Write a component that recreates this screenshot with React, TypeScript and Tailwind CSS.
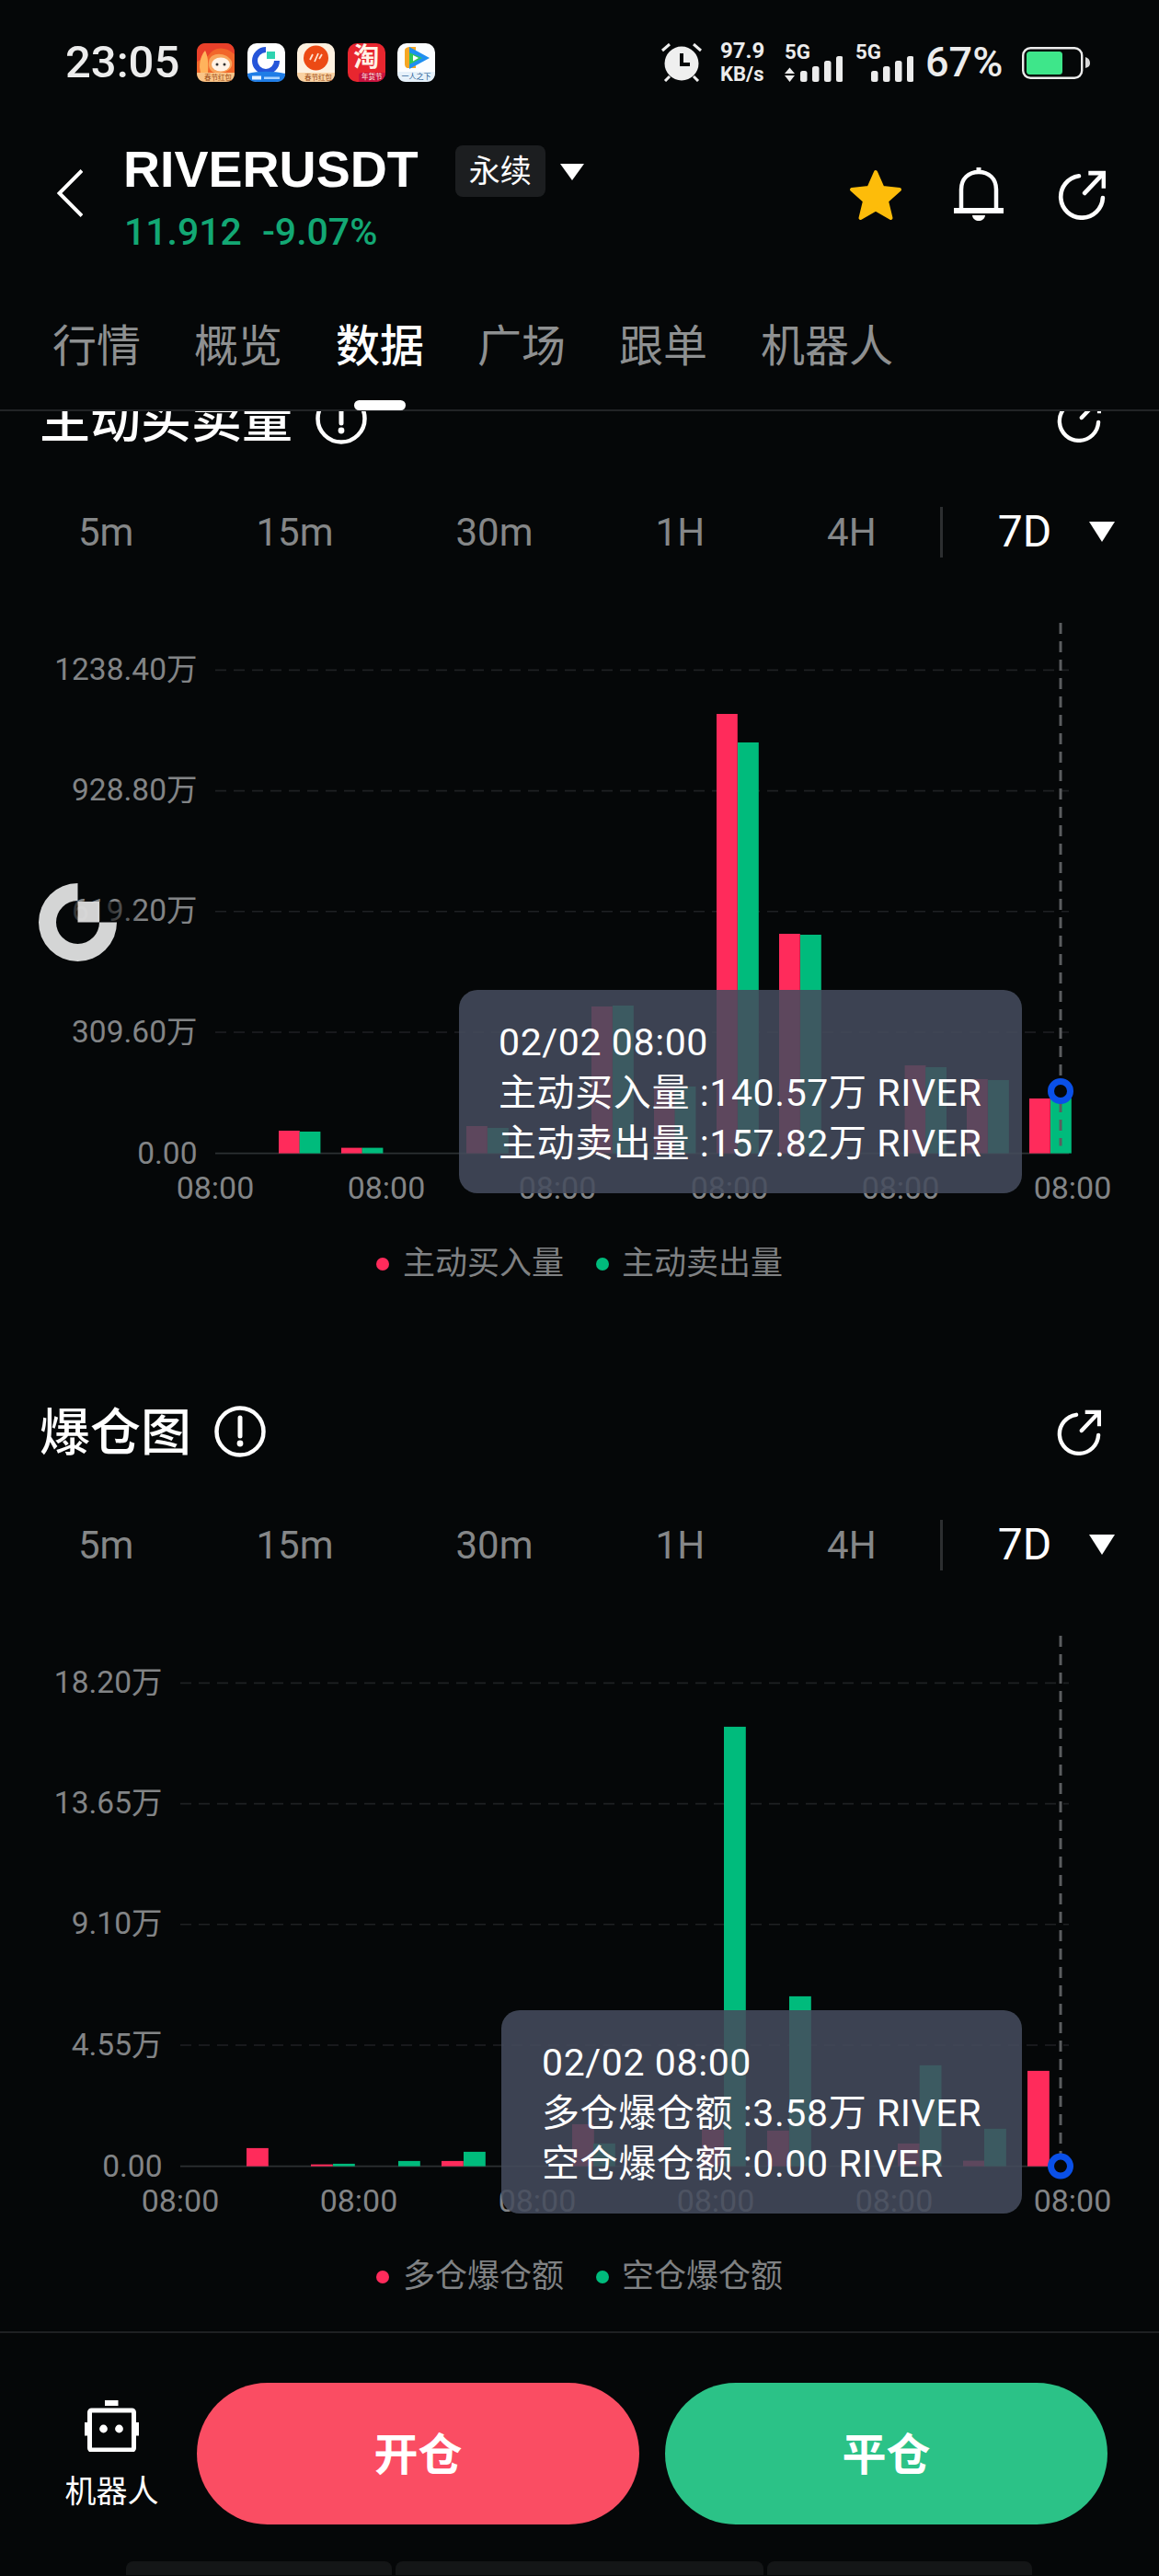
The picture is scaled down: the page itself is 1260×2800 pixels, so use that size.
import React from "react";

const RED = "#ff2b5b";
const GREEN = "#00bb7c";

type Bar = [number, number, string];

const flowBars: Bar[] = [
  [303, 24.6, RED], [325.6, 23.6, GREEN],
  [371, 6, RED], [393.6, 6, GREEN],
  [507, 29.6, RED], [530, 27.6, GREEN],
  [643, 159.6, RED], [666, 160.6, GREEN],
  [711, 72, RED], [733.6, 72.6, GREEN],
  [779, 477.6, RED], [802, 446.6, GREEN],
  [847, 238.6, RED], [870, 237.6, GREEN],
  [983.6, 95.6, RED], [1006.2, 93.6, GREEN],
  [1051, 80.6, RED], [1074, 79.6, GREEN],
  [1119, 59.6, RED], [1142, 59.6, GREEN],
];

const liqBars: Bar[] = [
  [268, 19.7, RED],
  [338, 2, RED], [362, 2.7, GREEN],
  [433, 5.7, GREEN],
  [480, 5.7, RED], [504, 15.7, GREEN],
  [622, 45.7, RED], [645, 24.7, GREEN],
  [763, 39.7, RED], [787, 477.7, GREEN],
  [834, 38.7, RED], [858, 184.7, GREEN],
  [976, 24.7, RED], [999.7, 109.7, GREEN],
  [1047, 6, RED], [1070, 40.7, GREEN],
  [1117, 103.7, RED],
];

function BackIcon() {
  return (
    <svg width="28" height="52" viewBox="0 0 28 52" fill="none" stroke="white" strokeWidth="4">
      <path d="M27 1.5 L2.5 26 L27 50.5" />
    </svg>
  );
}

function StarIcon() {
  return (
    <svg width="58" height="56" viewBox="0 0 58 56">
      <path
        d="M29 3 L36.5 20 L55 22 L41 34.5 L45.5 53 L29 43.5 L12.5 53 L17 34.5 L3 22 L21.5 20 Z"
        fill="#fdbc0a"
        stroke="#fdbc0a"
        strokeWidth="4"
        strokeLinejoin="round"
      />
    </svg>
  );
}

function BellIcon() {
  return (
    <svg width="54" height="60" viewBox="0 0 54 60" fill="none" stroke="white" strokeWidth="4.5">
      <path d="M8 47 V24 C8 12 16 5 27 5 C38 5 46 12 46 24 V47" />
      <path d="M0 47 H54" strokeWidth="6" />
      <path d="M27 0 V5" strokeWidth="5" />
      <path d="M20 52 H34 C33 60 21 60 20 52 Z" fill="white" stroke="none" />
    </svg>
  );
}

function ShareIcon({ size = 54 }: { size?: number }) {
  return (
    <svg width={size} height={size} viewBox="0 0 52 52" fill="none" stroke="white" strokeWidth="4.5" strokeLinecap="round">
      <path d="M24 6 A22 22 0 1 0 49 29" />
      <path d="M30 24 L49 4" />
      <path d="M34 3 H50 V19" strokeLinecap="butt" />
    </svg>
  );
}

function InfoIcon() {
  return (
    <svg width="56" height="56" viewBox="0 0 56 56" fill="none" stroke="white" strokeWidth="4.5">
      <circle cx="28" cy="28" r="25.5" />
      <path d="M28 13 V33" strokeWidth="5" strokeLinecap="round" />
      <circle cx="28" cy="41" r="3.4" fill="white" stroke="none" />
    </svg>
  );
}

function AlarmIcon() {
  return (
    <svg width="44" height="42" viewBox="0 0 44 42">
      <circle cx="22" cy="22" r="18.5" fill="#efefef" />
      <path d="M22 11 V23 H31" fill="none" stroke="#050708" strokeWidth="4" />
      <path d="M1 8 L9 1 M43 8 L35 1 M4 41 L9 36 M40 41 L35 36" stroke="#efefef" strokeWidth="3" />
    </svg>
  );
}

function SimSignal({ arrows }: { arrows?: boolean }) {
  const bars = [
    [17, 12],
    [30, 17],
    [43, 23],
    [56, 28],
  ];
  // taller than the 42px row so the 5G label keeps its ascent inside the box
  return (
    <svg className="mt-[-6px]" width="63" height="48" viewBox="0 -6 63 48">
      <text x="0" y="17" fill="#ececec" fontSize="22" fontWeight="700" fontFamily="Roboto, sans-serif" textLength="28" lengthAdjust="spacingAndGlyphs">
        5G
      </text>
      {arrows && (
        <path d="M5.5 26.5 L11 33 H0 Z M0 35 H11 L5.5 42 Z" fill="#ececec" />
      )}
      {bars.map(([x, h]) => (
        <rect key={x} x={x} y={42 - h} width="7.5" height={h} rx="2.5" fill="#ececec" />
      ))}
    </svg>
  );
}

function Battery() {
  return (
    <svg width="74" height="35" viewBox="0 0 74 35">
      <rect x="1.2" y="1.2" width="64" height="32.6" rx="8" fill="none" stroke="#ececec" strokeWidth="2.4" />
      <rect x="5" y="5" width="39" height="25" rx="3.5" fill="#3ee68a" />
      <path d="M69 11 C72 12 74 14 74 17.5 C74 21 72 22 69 23 Z" fill="#d8d8d8" />
    </svg>
  );
}

// little launcher icons shown beside the clock
function AppIcons() {
  return (
    <div className="flex gap-[13.6px]">
      <svg width="41" height="42" viewBox="0 0 41 42">
        <rect width="41" height="42" rx="10" fill="#f2662a" />
        <path d="M0 10 C0 3 4 0 10 0 H31 C37 0 41 3 41 10 V12 C30 2 18 4 12 14 L0 20 Z" fill="#e9402a" />
        <path d="M3 26 C3 16 7 10 9 8 C11 12 13 18 12 32 H4 Z" fill="#ffb35c" />
        <path d="M13 20 C14 9 33 9 38 20 C40 30 28 33 20 32 C15 31 12 27 13 20 Z" fill="#f8a45a" />
        <ellipse cx="26" cy="23" rx="10" ry="7.5" fill="#fff2e6" />
        <circle cx="22" cy="23" r="1.5" fill="#333" />
        <circle cx="30" cy="23" r="1.5" fill="#333" />
        <path d="M0 32 H41 C41 39 37 42 31 42 H10 C4 42 0 39 0 32 Z" fill="#f9c487" />
        <text x="23" y="39.5" textAnchor="middle" fill="#9c4d17" fontSize="7.5" fontFamily="'Noto Sans CJK SC', sans-serif">
          春节红包
        </text>
      </svg>
      <svg width="41" height="42" viewBox="0 0 41 42">
        <rect width="41" height="42" rx="10" fill="#ffffff" />
        <path d="M20 7 A12 12 0 1 0 32 19" fill="none" stroke="#2555d9" strokeWidth="6" />
        <rect x="21" y="9" width="9" height="8" fill="#2ed3b0" />
        <path d="M0 33 C12 30 28 30 41 33 C41 39 37 42 31 42 H10 C4 42 0 39 0 33 Z" fill="#1f7de6" />
        <rect x="5" y="35.5" width="10" height="4" fill="#e6f2ff" />
        <rect x="18" y="36.5" width="17" height="2.5" fill="#a8d3ff" />
      </svg>
      <svg width="41" height="42" viewBox="0 0 41 42">
        <rect width="41" height="42" rx="10" fill="#fdf1e0" />
        <circle cx="20.5" cy="16" r="13.5" fill="#ec4a14" />
        <path d="M14 18 L17 12 M19 20 L23 11 M24 17 L27 12" stroke="#ffe3cf" strokeWidth="1.8" />
        <path d="M0 32 H41 C41 39 37 42 31 42 H10 C4 42 0 39 0 32 Z" fill="#f9d2a3" />
        <text x="23" y="39.5" textAnchor="middle" fill="#9c4d17" fontSize="7.5" fontFamily="'Noto Sans CJK SC', sans-serif">
          春节红包
        </text>
      </svg>
      <div className="w-[41px] h-[42px] rounded-[10px] overflow-hidden bg-[#e8262f] flex flex-col items-center text-[#fff3e6]">
        <span className="h-[32px] text-[28px] leading-[32px] font-bold">淘</span>
        <span className="self-end w-[29px] h-[10px] rounded-tl-[3px] bg-[#c9133f] text-[7.5px] leading-[10px] text-center whitespace-nowrap">年货节</span>
      </div>
      <svg width="41" height="42" viewBox="0 0 41 42">
        <rect width="41" height="42" rx="10" fill="#fbfdff" />
        <path d="M8 8 C8 5 11 4 14 4 L20 4 V27 L12 27 C9 27 8 25 8 22 Z" fill="#f5a623" />
        <path d="M13 4 L35 16 L13 28 Z" fill="#1f8ff0" />
        <path d="M13 10 L27 16 L13 23 Z" fill="#30c857" />
        <path d="M17 13 L23 16 L17 19.5 Z" fill="#ffffff" />
        <path d="M0 31 H41 C41 39 37 42 31 42 H10 C4 42 0 39 0 31 Z" fill="#e6f1fa" />
        <text x="20.5" y="39" textAnchor="middle" fill="#1e5c94" fontSize="8" fontFamily="'Noto Sans CJK SC', sans-serif">
          一人之下
        </text>
      </svg>
    </div>
  );
}

function RangeRow() {
  return (
    <div className="flex items-center h-[80px] pl-[85px] text-[42px] text-[#858788]">
      <div className="flex items-center gap-[133px]">
        <span>5m</span>
        <span>15m</span>
        <span>30m</span>
        <span>1H</span>
        <span>4H</span>
      </div>
      <div className="ml-[69px] w-[3px] h-[55px] bg-[#2c2e30]" />
      <span className="ml-[60px] text-[48px] text-white">7D</span>
      <svg className="ml-[41px]" width="28" height="22" viewBox="0 0 28 22">
        <path d="M0 0 H28 L14 22 Z" fill="white" />
      </svg>
    </div>
  );
}

type ChartProps = {
  ticks: string[];
  labelXs: number[];
  gridStart: number;
  bars: Bar[];
  barWidth: number;
  dotY: number;
  tooltipClass: string;
  tooltip: string[];
};

function Chart({ ticks, labelXs, gridStart, bars, barWidth, dotY, tooltipClass, tooltip }: ChartProps) {
  const base = 635.6;
  const gridYs = [110.4, 241.6, 372.8, 504];
  return (
    <div className="relative h-[722px]">
      <svg width="1260" height="722" viewBox="0 0 1260 722" className="block">
        {gridYs.map((y) => (
          <line key={y} x1={gridStart} x2="1162" y1={y} y2={y} stroke="#1f2123" strokeWidth="1.6" strokeDasharray="12 8" />
        ))}
        <line x1={gridStart} x2="1162" y1={base} y2={base} stroke="#2c3032" strokeWidth="1.6" />
        {ticks.map((t, i) => (
          <text key={t} x={gridStart - 19.5} y={[121, 252, 383, 515, 647][i]} textAnchor="end" fill="#828486" fontSize="33.5">
            {t}
          </text>
        ))}
        {bars.map(([x, h, c], i) => (
          <rect key={i} x={x} y={base - h} width={barWidth} height={h} fill={c} />
        ))}
        {labelXs.map((x) => (
          <text key={x} x={x} y={685} textAnchor="middle" fill="#828486" fontSize="34">
            08:00
          </text>
        ))}
        <line x1="1153" x2="1153" y1="59" y2={base - 8} stroke="#5b5d5f" strokeWidth="3" strokeDasharray="12 8" />
        <circle cx="1153" cy={dotY} r="10.5" fill="#050708" stroke="#0a50e8" strokeWidth="7" />
      </svg>
      <div className={`absolute h-[221px] pt-[30px] rounded-[20px] bg-[rgba(69,76,93,0.87)] text-[41px] leading-[55px] tracking-[0.6px] text-white ${tooltipClass}`}>
        {tooltip.map((line) => (
          <div key={line} className="whitespace-nowrap">
            {line}
          </div>
        ))}
      </div>
    </div>
  );
}

function Legend({ left, right }: { left: string; right: string }) {
  return (
    <div className="flex items-center h-[68px] pl-[409px] text-[35px] text-[#7f8183]">
      <span className="w-[14px] h-[14px] rounded-full bg-[#ff2b5b]" />
      <span className="ml-[15px]">{left}</span>
      <span className="ml-[35px] w-[14px] h-[14px] rounded-full bg-[#00bb7c]" />
      <span className="ml-[14px]">{right}</span>
    </div>
  );
}

function Section({ title, children }: { title: string; children: React.ReactNode }) {
  return (
    <section className="h-[1101px]">
      <div className="flex items-center h-[80px] pl-[43px] pr-[63px]">
        <h2 className="mt-[2px] text-[55px] font-medium leading-none text-white">{title}</h2>
        <span className="ml-[25px]">
          <InfoIcon />
        </span>
        <span className="ml-auto mt-[2px]">
          <ShareIcon size={50} />
        </span>
      </div>
      <div className="mt-[43px]">
        <RangeRow />
      </div>
      {children}
    </section>
  );
}

export default function App() {
  return (
    <div className="relative w-[1260px] h-[2800px] overflow-hidden flex flex-col bg-[#050708] font-['Roboto','Noto_Sans_CJK_SC',sans-serif]">
      {/* status bar */}
      <div className="flex items-center h-[136px] pl-[71px] pr-[75px] text-[#ececec]">
        <span className="text-[49px] font-medium w-[143px]">23:05</span>
        <AppIcons />
        <div className="ml-auto flex items-center">
          <AlarmIcon />
          <div className="ml-[20px] w-[50px] font-bold text-[24px] leading-[26px] whitespace-nowrap">
            <div>97.9</div>
            <div className="text-[22px]">KB/s</div>
          </div>
          <div className="ml-[20px]">
            <SimSignal arrows />
          </div>
          <div className="ml-[14px]">
            <SimSignal />
          </div>
          <span className="ml-[13px] w-[84px] text-[45px] font-medium whitespace-nowrap">67%</span>
          <span className="ml-[21px]">
            <Battery />
          </span>
        </div>
      </div>

      {/* symbol header */}
      <div className="flex items-start h-[164px] pl-[62px] pr-[58px]">
        <span className="mt-[48px]">
          <BackIcon />
        </span>
        <div className="ml-[44px] mt-[20px]">
          <div className="flex items-start">
            <h1 className="font-['Liberation_Sans',sans-serif] text-[55.5px] leading-[56px] font-bold text-white">RIVERUSDT</h1>
            <span className="ml-[40px] mt-[2px] flex items-center justify-center w-[98px] h-[56px] rounded-[8px] bg-[#1c1e20] text-[34px] text-white">
              永续
            </span>
            <svg className="ml-[16px] mt-[22px]" width="26" height="18" viewBox="0 0 26 18">
              <path d="M0 0 H26 L13 18 Z" fill="white" />
            </svg>
          </div>
          <div className="mt-[15px] ml-[1px] text-[41px] leading-[46px] font-medium text-[#13a874] flex gap-[22px]">
            <span>11.912</span>
            <span>-9.07%</span>
          </div>
        </div>
        <div className="ml-auto mt-[46px] flex items-center">
          <StarIcon />
          <span className="ml-[56px]">
            <BellIcon />
          </span>
          <span className="ml-[57px]">
            <ShareIcon />
          </span>
        </div>
      </div>

      {/* tabs */}
      <div className="relative flex items-start h-[147px] pl-[57px] pt-[47px] gap-[58px] border-b-2 border-[#222426] text-[48px] leading-[60px] text-[#8e9091] shrink-0">
        <span>行情</span>
        <span>概览</span>
        <span className="font-medium text-white">数据</span>
        <span>广场</span>
        <span>跟单</span>
        <span>机器人</span>
        <span className="absolute left-[385px] bottom-[-1px] w-[56px] h-[11px] rounded-full bg-white" />
      </div>

      {/* scrolling chart list */}
      <div className="h-[2087px] overflow-hidden">
        <div className="mt-[-32px]">
          <Section title="主动买卖量">
            <Chart
              ticks={["1238.40万", "928.80万", "619.20万", "309.60万", "0.00"]}
              labelXs={[234, 420, 606, 793, 979, 1166]}
              gridStart={234}
              bars={flowBars}
              barWidth={22.8}
              dotY={568}
              tooltipClass="left-[499px] top-[458px] w-[612px] pl-[43px]"
              tooltip={["02/02 08:00", "主动买入量 :140.57万 RIVER", "主动卖出量 :157.82万 RIVER"]}
            />
            <Legend left="主动买入量" right="主动卖出量" />
          </Section>
          <Section title="爆仓图">
            <Chart
              ticks={["18.20万", "13.65万", "9.10万", "4.55万", "0.00"]}
              labelXs={[196, 390, 584, 778, 972, 1166]}
              gridStart={196}
              bars={liqBars}
              barWidth={23.8}
              dotY={635.6}
              tooltipClass="left-[545px] top-[466px] w-[566px] pl-[44px]"
              tooltip={["02/02 08:00", "多仓爆仓额 :3.58万 RIVER", "空仓爆仓额 :0.00 RIVER"]}
            />
            <Legend left="多仓爆仓额" right="空仓爆仓额" />
          </Section>
        </div>
      </div>

      {/* order bar */}
      <div className="border-t-2 border-[#1e2022] h-[264px] shrink-0 pt-[54px]">
        <div className="flex items-start">
          <div className="ml-[71px] w-[101px] mt-[19px] flex flex-col items-center">
            <svg width="59" height="56" viewBox="0 0 59 56">
              <rect x="22" y="0" width="14.5" height="6" fill="white" />
              <rect x="5.5" y="11" width="48" height="43" rx="2" fill="none" stroke="white" strokeWidth="5" />
              <rect x="0" y="24" width="4" height="14.5" fill="white" />
              <rect x="55" y="24" width="4" height="14.5" fill="white" />
              <circle cx="20.5" cy="31" r="4.4" fill="white" />
              <circle cx="37.5" cy="31" r="4.4" fill="white" />
            </svg>
            <span className="mt-[21px] text-[34px] leading-[44px] whitespace-nowrap text-white">机器人</span>
          </div>
          <button className="ml-[42px] w-[481px] h-[154px] pt-[3px] rounded-full bg-[#fa4d63] text-[48px] font-bold text-white">开仓</button>
          <button className="ml-[28px] w-[481px] h-[154px] pt-[3px] rounded-full bg-[#2bc287] text-[48px] font-bold text-white">平仓</button>
        </div>
        <div className="mt-[40px] flex h-[15px] pl-[137px] gap-[4px]">
          <div className="w-[289px] rounded-t-[8px] bg-[#141617]" />
          <div className="w-[400px] rounded-t-[8px] bg-[#141617]" />
          <div className="w-[288px] rounded-t-[8px] bg-[#141617]" />
        </div>
      </div>

      {/* floating assistant bubble */}
      <svg className="absolute left-[42px] top-[960px]" width="112" height="86" viewBox="0 0 112 86">
        <defs>
          <linearGradient id="bubbleFade" x1="0" x2="1" y1="0" y2="0">
            <stop offset="0.6" stopColor="#050708" stopOpacity="0.62" />
            <stop offset="1" stopColor="#050708" stopOpacity="0" />
          </linearGradient>
        </defs>
        <rect x="30" y="20" width="82" height="44" fill="url(#bubbleFade)" />
        <path d="M42.5 0 A42.5 42.5 0 1 0 85 42.5 H66 A23.5 23.5 0 1 1 42.5 19 Z" fill="#d4d5d5" />
        <rect x="42.5" y="20" width="23.5" height="22.5" fill="#e4e4e4" fillOpacity="0.92" />
      </svg>
    </div>
  );
}
